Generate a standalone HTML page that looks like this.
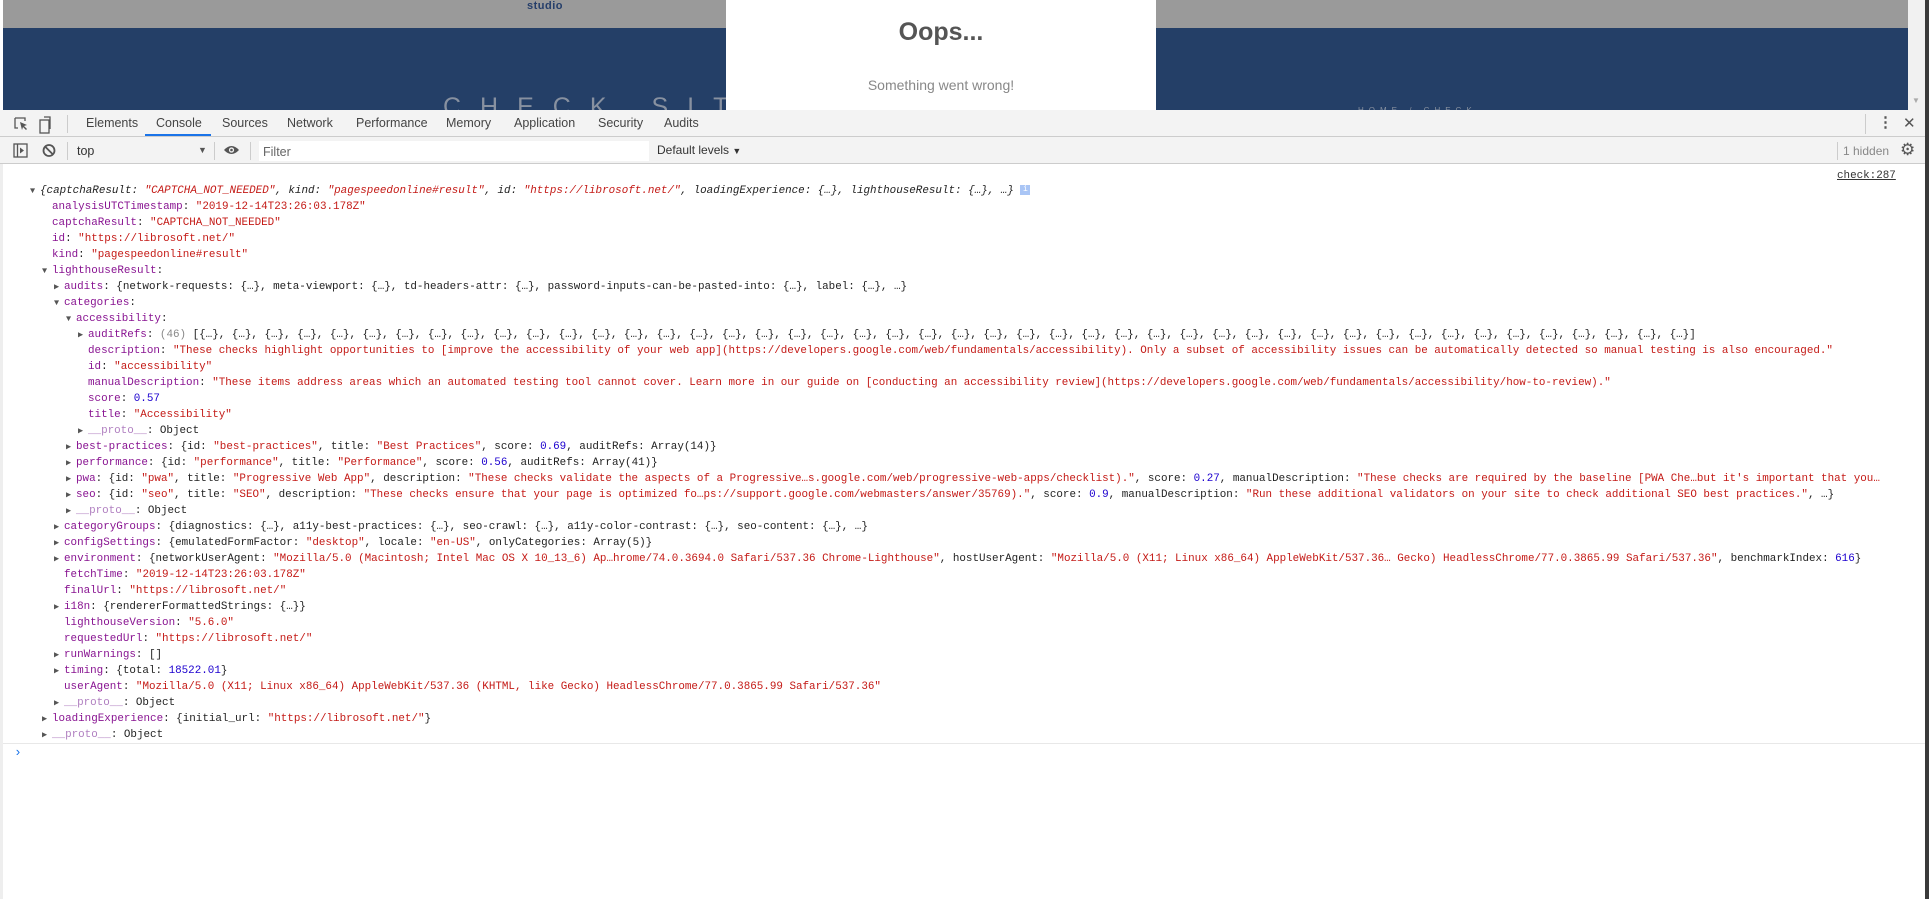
<!DOCTYPE html>
<html><head><meta charset="utf-8">
<style>
*{margin:0;padding:0;box-sizing:border-box}
body{width:1929px;height:899px;overflow:hidden;background:#fff;position:relative;font-family:"Liberation Sans",sans-serif}
.abs{position:absolute}
.mono{font-family:"Liberation Mono",monospace;font-size:10.9px;color:#222;white-space:pre;line-height:16px}
.k{color:#881391}.s{color:#c41a16}.n{color:#1c00cf}.p{color:#b07fc0}
.tri{position:absolute;font-size:8.5px;color:#555;top:0}
.tab{position:absolute;top:116px;font-size:12.5px;color:#444}
</style></head><body>
<div class="abs" style="left:0;top:0;width:1929px;height:110px;background:#fff"></div>
<div class="abs" style="left:3px;top:0;width:1905px;height:28px;background:#9a9a9a"></div>
<div class="abs" style="left:527px;top:0px;font-size:11px;font-weight:bold;color:#253e6a;letter-spacing:0.5px">studio</div>
<div class="abs" style="left:3px;top:28px;width:1905px;height:82px;background:#243f67"></div>
<div class="abs" style="left:443px;top:93px;font-size:25px;color:#8891a0;letter-spacing:19px;font-weight:300">CHECK SITE S</div>
<div class="abs" style="left:1358px;top:106px;font-size:8px;color:#8891a0;letter-spacing:5px">HOME / CHECK</div>
<div class="abs" style="left:726px;top:0;width:430px;height:110px;background:#fff"></div>
<div class="abs" style="left:726px;top:18px;width:430px;text-align:center;font-size:25px;font-weight:bold;color:#555">Oops...</div>
<div class="abs" style="left:726px;top:77px;width:430px;text-align:center;font-size:14px;color:#888">Something went wrong!</div>
<div class="abs" style="left:1908px;top:0;width:17px;height:110px;background:#f1f1f1"></div>
<div class="abs" style="left:1912px;top:96px;font-size:8px;color:#aaa">▼</div>
<div class="abs" style="left:1925px;top:0;width:4px;height:899px;background:#3a3a3a"></div>
<div class="abs" style="left:0;top:110px;width:1925px;height:27px;background:#f3f3f3;border-bottom:1px solid #ccc"></div>
<svg class="abs" style="left:13px;top:116px" width="40" height="18" viewBox="0 0 40 18">
<path d="M2 2h10v3M2 2v10h3" fill="none" stroke="#555" stroke-width="1.3"/>
<path d="M7 6l7 3-3 1 3 3-1 1-3-3-1 3z" fill="#555"/>
<rect x="27" y="4" width="9" height="13" fill="none" stroke="#555" stroke-width="1.3"/>
<path d="M31 1h6v12" fill="none" stroke="#555" stroke-width="1.3"/>
</svg>
<div class="abs" style="left:67px;top:115px;width:1px;height:18px;background:#ccc"></div>
<div class="tab" style="left:86px">Elements</div>
<div class="tab" style="left:156px">Console</div>
<div class="abs" style="left:145px;top:134px;width:66px;height:2px;background:#1a73e8"></div>
<div class="tab" style="left:222px">Sources</div>
<div class="tab" style="left:287px">Network</div>
<div class="tab" style="left:356px">Performance</div>
<div class="tab" style="left:446px">Memory</div>
<div class="tab" style="left:514px">Application</div>
<div class="tab" style="left:598px">Security</div>
<div class="tab" style="left:664px">Audits</div>
<div class="abs" style="left:1865px;top:114px;width:1px;height:20px;background:#ccc"></div>
<div class="abs" style="left:1878px;top:113px;font-size:15px;color:#555;font-weight:bold">⋮</div>
<div class="abs" style="left:1903px;top:114px;font-size:15px;color:#555">✕</div>
<div class="abs" style="left:0;top:137px;width:1925px;height:27px;background:#f3f3f3;border-bottom:1px solid #ccc"></div>
<svg class="abs" style="left:13px;top:143px" width="45" height="16" viewBox="0 0 45 16">
<rect x="1" y="1" width="13" height="13" fill="none" stroke="#555" stroke-width="1.3"/>
<line x1="4.5" y1="1" x2="4.5" y2="14" stroke="#555" stroke-width="1.3"/>
<path d="M7 4.5l4 3-4 3z" fill="#555"/>
<circle cx="36" cy="7.5" r="5.5" fill="none" stroke="#555" stroke-width="1.8"/>
<line x1="32" y1="3.5" x2="40" y2="11.5" stroke="#555" stroke-width="1.8"/>
</svg>
<div class="abs" style="left:67px;top:142px;width:1px;height:18px;background:#ccc"></div>
<div class="abs" style="left:77px;top:144px;font-size:12.5px;color:#333">top</div>
<div class="abs" style="left:198px;top:145px;font-size:9px;color:#555">▼</div>
<div class="abs" style="left:214px;top:142px;width:1px;height:18px;background:#ccc"></div>
<svg class="abs" style="left:223px;top:144px" width="17" height="12" viewBox="0 0 17 12"><path d="M1 6Q8.5-2 16 6Q8.5 14 1 6z" fill="#555"/><circle cx="8.5" cy="6" r="2.6" fill="#f3f3f3"/><circle cx="8.5" cy="6" r="1.3" fill="#555"/></svg>
<div class="abs" style="left:250px;top:142px;width:1px;height:18px;background:#ccc"></div>
<div class="abs" style="left:259px;top:141px;width:390px;height:20px;background:#fff"></div>
<div class="abs" style="left:263px;top:145px;font-size:12.5px;color:#666">Filter</div>
<div class="abs" style="left:657px;top:143px;font-size:12px;color:#333">Default levels <span style="font-size:9px">▼</span></div>
<div class="abs" style="left:1837px;top:142px;width:1px;height:18px;background:#ccc"></div>
<div class="abs" style="left:1843px;top:144px;font-size:12px;color:#888">1 hidden</div>
<div class="abs" style="left:1900px;top:140px;font-size:17px;color:#555">⚙</div>
<div class="abs" style="left:0;top:164px;width:3px;height:735px;background:#eee"></div>
<div class="abs mono" style="left:1837px;top:168px;text-decoration:underline;color:#333">check:287</div>
<div class="abs mono" style="left:0;top:183px;width:1905px;height:560px;overflow:hidden">
<div class="abs" style="left:40px;top:0"><span class="tri" style="left:-10px">▼</span><i>{captchaResult: <span class="s">"CAPTCHA_NOT_NEEDED"</span>, kind: <span class="s">"pagespeedonline#result"</span>, id: <span class="s">"https://librosoft.net/"</span>, loadingExperience: {…}, lighthouseResult: {…}, …}</i> <span style="display:inline-block;width:10px;height:10px;background:#a9c5f5;color:#fff;font-size:8px;text-align:center;line-height:10px;vertical-align:middle">i</span></div>
<div class="abs" style="left:52px;top:16px"><span class="k">analysisUTCTimestamp</span>: <span class="s">"2019-12-14T23:26:03.178Z"</span></div>
<div class="abs" style="left:52px;top:32px"><span class="k">captchaResult</span>: <span class="s">"CAPTCHA_NOT_NEEDED"</span></div>
<div class="abs" style="left:52px;top:48px"><span class="k">id</span>: <span class="s">"https://librosoft.net/"</span></div>
<div class="abs" style="left:52px;top:64px"><span class="k">kind</span>: <span class="s">"pagespeedonline#result"</span></div>
<div class="abs" style="left:52px;top:80px"><span class="tri" style="left:-10px">▼</span><span class="k">lighthouseResult</span>:</div>
<div class="abs" style="left:64px;top:96px"><span class="tri" style="left:-10px">▶</span><span class="k">audits</span>: {network-requests: {…}, meta-viewport: {…}, td-headers-attr: {…}, password-inputs-can-be-pasted-into: {…}, label: {…}, …}</div>
<div class="abs" style="left:64px;top:112px"><span class="tri" style="left:-10px">▼</span><span class="k">categories</span>:</div>
<div class="abs" style="left:76px;top:128px"><span class="tri" style="left:-10px">▼</span><span class="k">accessibility</span>:</div>
<div class="abs" style="left:88px;top:144px"><span class="tri" style="left:-10px">▶</span><span class="k">auditRefs</span>: <span style="color:#888">(46)</span> [{…}, {…}, {…}, {…}, {…}, {…}, {…}, {…}, {…}, {…}, {…}, {…}, {…}, {…}, {…}, {…}, {…}, {…}, {…}, {…}, {…}, {…}, {…}, {…}, {…}, {…}, {…}, {…}, {…}, {…}, {…}, {…}, {…}, {…}, {…}, {…}, {…}, {…}, {…}, {…}, {…}, {…}, {…}, {…}, {…}, {…}]</div>
<div class="abs" style="left:88px;top:160px"><span class="k">description</span>: <span class="s">"These checks highlight opportunities to [improve the accessibility of your web app](https://developers.google.com/web/fundamentals/accessibility). Only a subset of accessibility issues can be automatically detected so manual testing is also encouraged."</span></div>
<div class="abs" style="left:88px;top:176px"><span class="k">id</span>: <span class="s">"accessibility"</span></div>
<div class="abs" style="left:88px;top:192px"><span class="k">manualDescription</span>: <span class="s">"These items address areas which an automated testing tool cannot cover. Learn more in our guide on [conducting an accessibility review](https://developers.google.com/web/fundamentals/accessibility/how-to-review)."</span></div>
<div class="abs" style="left:88px;top:208px"><span class="k">score</span>: <span class="n">0.57</span></div>
<div class="abs" style="left:88px;top:224px"><span class="k">title</span>: <span class="s">"Accessibility"</span></div>
<div class="abs" style="left:88px;top:240px"><span class="tri" style="left:-10px">▶</span><span class="p">__proto__</span>: Object</div>
<div class="abs" style="left:76px;top:256px"><span class="tri" style="left:-10px">▶</span><span class="k">best-practices</span>: {id: <span class="s">"best-practices"</span>, title: <span class="s">"Best Practices"</span>, score: <span class="n">0.69</span>, auditRefs: Array(14)}</div>
<div class="abs" style="left:76px;top:272px"><span class="tri" style="left:-10px">▶</span><span class="k">performance</span>: {id: <span class="s">"performance"</span>, title: <span class="s">"Performance"</span>, score: <span class="n">0.56</span>, auditRefs: Array(41)}</div>
<div class="abs" style="left:76px;top:288px"><span class="tri" style="left:-10px">▶</span><span class="k">pwa</span>: {id: <span class="s">"pwa"</span>, title: <span class="s">"Progressive Web App"</span>, description: <span class="s">"These checks validate the aspects of a Progressive…s.google.com/web/progressive-web-apps/checklist)."</span>, score: <span class="n">0.27</span>, manualDescription: <span class="s">"These checks are required by the baseline [PWA Che…but it's important that you…</span></div>
<div class="abs" style="left:76px;top:304px"><span class="tri" style="left:-10px">▶</span><span class="k">seo</span>: {id: <span class="s">"seo"</span>, title: <span class="s">"SEO"</span>, description: <span class="s">"These checks ensure that your page is optimized fo…ps://support.google.com/webmasters/answer/35769)."</span>, score: <span class="n">0.9</span>, manualDescription: <span class="s">"Run these additional validators on your site to check additional SEO best practices."</span>, …}</div>
<div class="abs" style="left:76px;top:320px"><span class="tri" style="left:-10px">▶</span><span class="p">__proto__</span>: Object</div>
<div class="abs" style="left:64px;top:336px"><span class="tri" style="left:-10px">▶</span><span class="k">categoryGroups</span>: {diagnostics: {…}, a11y-best-practices: {…}, seo-crawl: {…}, a11y-color-contrast: {…}, seo-content: {…}, …}</div>
<div class="abs" style="left:64px;top:352px"><span class="tri" style="left:-10px">▶</span><span class="k">configSettings</span>: {emulatedFormFactor: <span class="s">"desktop"</span>, locale: <span class="s">"en-US"</span>, onlyCategories: Array(5)}</div>
<div class="abs" style="left:64px;top:368px"><span class="tri" style="left:-10px">▶</span><span class="k">environment</span>: {networkUserAgent: <span class="s">"Mozilla/5.0 (Macintosh; Intel Mac OS X 10_13_6) Ap…hrome/74.0.3694.0 Safari/537.36 Chrome-Lighthouse"</span>, hostUserAgent: <span class="s">"Mozilla/5.0 (X11; Linux x86_64) AppleWebKit/537.36… Gecko) HeadlessChrome/77.0.3865.99 Safari/537.36"</span>, benchmarkIndex: <span class="n">616</span>}</div>
<div class="abs" style="left:64px;top:384px"><span class="k">fetchTime</span>: <span class="s">"2019-12-14T23:26:03.178Z"</span></div>
<div class="abs" style="left:64px;top:400px"><span class="k">finalUrl</span>: <span class="s">"https://librosoft.net/"</span></div>
<div class="abs" style="left:64px;top:416px"><span class="tri" style="left:-10px">▶</span><span class="k">i18n</span>: {rendererFormattedStrings: {…}}</div>
<div class="abs" style="left:64px;top:432px"><span class="k">lighthouseVersion</span>: <span class="s">"5.6.0"</span></div>
<div class="abs" style="left:64px;top:448px"><span class="k">requestedUrl</span>: <span class="s">"https://librosoft.net/"</span></div>
<div class="abs" style="left:64px;top:464px"><span class="tri" style="left:-10px">▶</span><span class="k">runWarnings</span>: []</div>
<div class="abs" style="left:64px;top:480px"><span class="tri" style="left:-10px">▶</span><span class="k">timing</span>: {total: <span class="n">18522.01</span>}</div>
<div class="abs" style="left:64px;top:496px"><span class="k">userAgent</span>: <span class="s">"Mozilla/5.0 (X11; Linux x86_64) AppleWebKit/537.36 (KHTML, like Gecko) HeadlessChrome/77.0.3865.99 Safari/537.36"</span></div>
<div class="abs" style="left:64px;top:512px"><span class="tri" style="left:-10px">▶</span><span class="p">__proto__</span>: Object</div>
<div class="abs" style="left:52px;top:528px"><span class="tri" style="left:-10px">▶</span><span class="k">loadingExperience</span>: {initial_url: <span class="s">"https://librosoft.net/"</span>}</div>
<div class="abs" style="left:52px;top:544px"><span class="tri" style="left:-10px">▶</span><span class="p">__proto__</span>: Object</div>
</div>
<div class="abs" style="left:3px;top:743px;width:1922px;height:1px;background:#e8e8e8"></div>
<div class="abs" style="left:14px;top:745px;font-size:13px;color:#1a73e8;font-family:'Liberation Mono',monospace">›</div>
</body></html>
